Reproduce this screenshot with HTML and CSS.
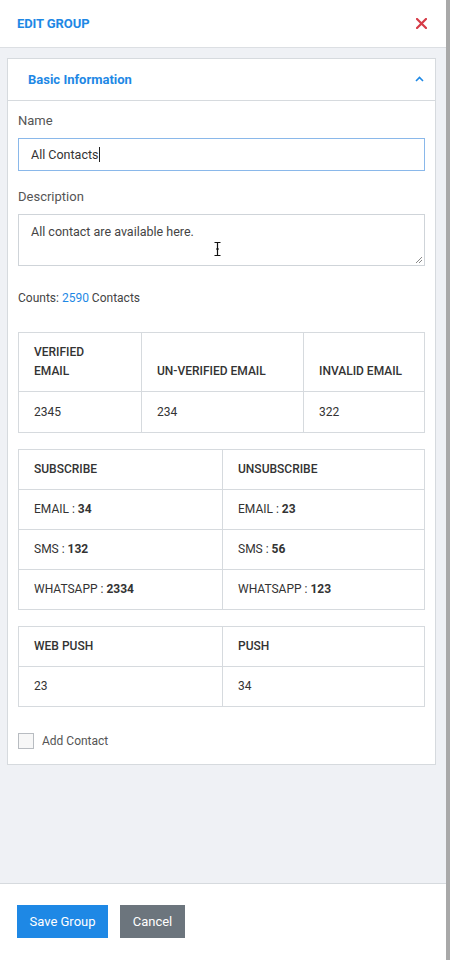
FILE: index.html
```html
<!DOCTYPE html>
<html>
<head>
<meta charset="utf-8">
<link rel="stylesheet" href="styles.css">
</head>
<body>
<div class="frame">
  <div class="panel">
    <header class="top">
      <h1 class="title">EDIT GROUP</h1>
      <svg class="close" width="11" height="11" viewBox="0 0 11 11"><path d="M1 1L10 10M10 1L1 10" stroke="#d63b47" stroke-width="2.2" stroke-linecap="square"/></svg>
    </header>
    <main class="content">
      <section class="card">
        <div class="card-head">
          <span class="card-title">Basic Information</span>
          <svg class="chev" width="9" height="6" viewBox="0 0 9 6"><path d="M1 5L4.5 1.5L8 5" fill="none" stroke="#1e88e5" stroke-width="1.6"/></svg>
        </div>
        <div class="card-body">
          <label class="lbl">Name</label>
          <div class="input focused"><span>All Contacts</span><span class="caret"></span></div>
          <label class="lbl lbl-gap">Description</label>
          <div class="textarea">
            <span>All contact are available here.</span>
            <svg class="ibeam" width="7" height="14" viewBox="0 0 7 14"><path d="M0.5 0.5H6.5M3.5 0.5V13.5M0.5 13.5H6.5M2 7H5" fill="none" stroke="#111" stroke-width="1.2"/></svg>
            <svg class="grip" width="8" height="8" viewBox="0 0 8 8"><path d="M7 1L1 7M7 4L4 7" stroke="#888" stroke-width="1"/></svg>
          </div>
          <p class="counts">Counts: <span class="num">2590</span> Contacts</p>

          <div class="grid g3">
            <div class="cell head tall"><span>VERIFIED<br>EMAIL</span></div>
            <div class="cell head tall"><span>UN-VERIFIED EMAIL</span></div>
            <div class="cell head tall"><span>INVALID EMAIL</span></div>
            <div class="cell val">2345</div>
            <div class="cell val">234</div>
            <div class="cell val">322</div>
          </div>

          <div class="grid g2 gap-a">
            <div class="cell head">SUBSCRIBE</div>
            <div class="cell head">UNSUBSCRIBE</div>
            <div class="cell"><span>EMAIL : <b>34</b></span></div>
            <div class="cell"><span>EMAIL : <b>23</b></span></div>
            <div class="cell"><span>SMS : <b>132</b></span></div>
            <div class="cell"><span>SMS : <b>56</b></span></div>
            <div class="cell"><span>WHATSAPP : <b>2334</b></span></div>
            <div class="cell"><span>WHATSAPP : <b>123</b></span></div>
          </div>

          <div class="grid g2 gap-b">
            <div class="cell head">WEB PUSH</div>
            <div class="cell head">PUSH</div>
            <div class="cell">23</div>
            <div class="cell">34</div>
          </div>

          <div class="check-row">
            <span class="box"></span>
            <span class="check-label">Add Contact</span>
          </div>
        </div>
      </section>
    </main>
    <footer class="foot">
      <button class="btn primary">Save Group</button>
      <button class="btn secondary">Cancel</button>
    </footer>
  </div>
  <div class="scrollbar"></div>
</div>
</body>
</html>
```
FILE: styles.css
```css
* { box-sizing: border-box; }
html, body { margin: 0; padding: 0; }
body {
  font-family: Roboto, "Liberation Sans", Arial, sans-serif;
  color: #333;
  background: #fff;
}
.frame {
  display: flex;
  width: 450px;
  height: 960px;
}
.panel {
  width: 446px;
  display: flex;
  flex-direction: column;
}
.scrollbar {
  width: 4px;
  background: #a9a9a9;
}
.top {
  height: 48px;
  border-bottom: 1px solid #dcdfe3;
  display: flex;
  align-items: center;
  justify-content: space-between;
  padding: 0 19px 0 17px;
  flex: none;
}
.title {
  margin: 0;
  font-size: 13px;
  font-weight: 700;
  color: #1e88e5;
  letter-spacing: -0.1px;
}
.content {
  flex: 1;
  background: #eff1f5;
  padding: 10px 10px 0 7px;
}
.card {
  background: #fff;
  border: 1px solid #d6dade;
}
.card-head {
  height: 42px;
  border-bottom: 1px solid #d6dade;
  display: flex;
  align-items: center;
  justify-content: space-between;
  padding: 0 11px 0 20px;
}
.card-title {
  font-size: 13px;
  font-weight: 700;
  color: #1e88e5;
}
.chev { margin-top: -2px; }
.card-body {
  padding: 12px 10px 15px 10px;
}
.lbl {
  display: block;
  font-size: 13px;
  line-height: 16px;
  color: #555;
  margin-bottom: 9px;
}
.lbl-gap { margin-top: 18px; }
.input {
  height: 33px;
  border: 1px solid #cfd4d9;
  display: flex;
  align-items: center;
  padding-left: 12px;
  font-size: 12.5px;
  color: #333;
}
.input.focused { border-color: #8ab8ea; }
.caret {
  display: inline-block;
  width: 1px;
  height: 15px;
  background: #222;
  margin-left: 1px;
}
.textarea {
  position: relative;
  height: 52px;
  border: 1px solid #cfd4d9;
  padding: 9px 12px;
  font-size: 12.5px;
  color: #444;
}
.ibeam {
  position: absolute;
  left: 195px;
  top: 27px;
}
.grip {
  position: absolute;
  right: 1px;
  bottom: 1px;
}
.counts {
  margin: 24px 0 0 0;
  font-size: 12px;
  line-height: 16px;
  color: #444;
}
.num { color: #1e88e5; }
.grid {
  display: grid;
  border-top: 1px solid #d6dade;
  border-left: 1px solid #d6dade;
  margin-top: 26px;
}
.g3 { grid-template-columns: 123px 162px 1fr; }
.g2 { grid-template-columns: 204px 1fr; }
.gap-a { margin-top: 16px; }
.gap-b { margin-top: 16px; }
.cell {
  border-right: 1px solid #d6dade;
  border-bottom: 1px solid #d6dade;
  height: 40px;
  display: flex;
  align-items: center;
  padding-left: 15px;
  font-size: 12px;
  line-height: 17px;
  color: #333;
}
.cell b { font-weight: 700; }
.cell.head { font-weight: 500; color: #333; }
.cell.tall {
  height: 59px;
  align-items: flex-end;
  line-height: 19px;
  padding-bottom: 10px;
}
.cell.val { height: 41px; }
.check-row {
  display: flex;
  align-items: center;
  margin-top: 26px;
}
.box {
  width: 16px;
  height: 16px;
  border: 1px solid #b8bcc1;
  background: #f7f7f7;
}
.check-label {
  margin-left: 8px;
  font-size: 12px;
  color: #555;
}
.foot {
  height: 77px;
  flex: none;
  border-top: 1px solid #d6dade;
  display: flex;
  align-items: center;
  gap: 12px;
  padding: 0 0 0 17px;
}
.btn {
  height: 33px;
  border: none;
  font-family: Roboto, "Liberation Sans", Arial, sans-serif;
  font-size: 13px;
  color: #fff;
  padding: 0;
  margin-top: -1px;
}
.primary { background: #1e88e5; width: 91px; }
.secondary { background: #6c757d; width: 65px; }
```
